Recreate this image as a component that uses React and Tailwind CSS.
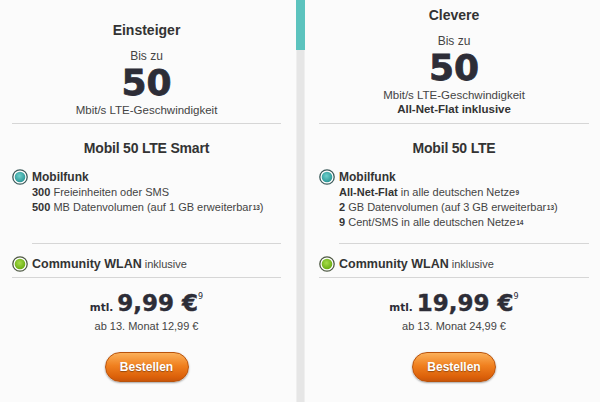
import React from "react";

function Dot({ id, inner, light, ring }) {
  return (
    <svg width="16" height="16" viewBox="0 0 16 16" className="shrink-0">
      <defs>
        <radialGradient id={id} cx="45%" cy="40%" r="60%">
          <stop offset="0%" stopColor={light} />
          <stop offset="100%" stopColor={inner} />
        </radialGradient>
      </defs>
      <circle cx="8" cy="8" r="7.2" fill="#ffffff" stroke={ring} strokeWidth="1.3" />
      <circle cx="8" cy="8" r="5.3" fill={`url(#${id})`} />
    </svg>
  );
}

function Sup({ children }) {
  return <sup className="text-[6.5px] font-bold relative top-[-1px] ml-[0.5px]">{children}</sup>;
}

function Plan({ title, extra, product, lines, price, later, pad }) {
  return (
    <div className={`flex flex-col ${pad}`}>
      <div className="h-[123px] flex flex-col items-center justify-end pb-[7px]">
        <div className="text-[14px] leading-[18px] font-bold text-[#333]">{title}</div>
        <div className="mt-[12px] text-[12px] leading-[11px] text-[#444]">Bis zu</div>
        <div className="font-['DejaVu_Sans',sans-serif] font-bold text-[36px] leading-[42px] text-[#2d2d37] [-webkit-text-stroke:0.8px_#2d2d37]">
          50
        </div>
        <div className="text-[11.5px] leading-[12px] text-[#444]">Mbit/s LTE-Geschwindigkeit</div>
        {extra && (
          <div className="mt-[1px] text-[11.5px] leading-[14px] font-bold text-[#333]">{extra}</div>
        )}
      </div>
      <div className="h-px bg-[#d6d6d6]" />
      <div className="h-[119px] flex flex-col">
        <div className="mt-[15px] text-[14px] leading-[18px] font-bold text-center text-[#333] tracking-[-0.2px]">
          {product}
        </div>
        <div className="mt-[12px] flex gap-[4px]">
          <Dot id={`t-${title}`} inner="#2a9696" light="#6fd0cc" ring="#3e5c5c" />
          <div className="flex flex-col">
            <div className="text-[12px] leading-[16px] font-bold text-[#333]">Mobilfunk</div>
            {lines.map((l, i) => (
              <div key={i} className="text-[11px] leading-[15px] text-[#444]">
                {l}
              </div>
            ))}
          </div>
        </div>
      </div>
      <div className="ml-[20px] h-px bg-[#d6d6d6]" />
      <div className="mt-[12px] flex items-center gap-[4px] h-[16px]">
        <Dot id={`g-${title}`} inner="#6aac12" light="#a6dc4a" ring="#4f5a44" />
        <div className="flex items-baseline gap-[3px]">
          <span className="text-[12.5px] leading-[16px] font-bold text-[#333]">Community WLAN</span>
          <span className="text-[11px] leading-[16px] text-[#444]">inklusive</span>
        </div>
      </div>
      <div className="mt-[5px] h-px bg-[#d6d6d6]" />
      <div className="mt-[11px] h-[28px] flex items-baseline justify-center font-['DejaVu_Sans',sans-serif] font-bold text-[#2d2d37]">
        <span className="text-[10.5px] mr-[4px]">mtl.</span>
        <span className="text-[23px] leading-[28px] [-webkit-text-stroke:0.4px_#2d2d37]">{price}</span>
        <span className="text-[8px] leading-[10px] self-start mt-[3px] font-normal">9</span>
      </div>
      <div className="mt-[2px] text-center text-[11px] leading-[14px] text-[#444]">{later}</div>
      <div className="mt-[19px] flex justify-center">
        <div className="w-[84px] h-[30px] rounded-full border border-[#b9530c] bg-[linear-gradient(to_bottom,#fbb05a,#f0801f_45%,#dc610a_85%,#c9560a)] shadow-[0_1px_2px_rgba(0,0,0,0.35)] flex items-center justify-center text-white font-bold text-[12px] [text-shadow:0_1px_1px_rgba(0,0,0,0.35)]">
          Bestellen
        </div>
      </div>
    </div>
  );
}

export default function App() {
  return (
    <div className="w-[600px] h-[402px] flex bg-[#fbfbfb] overflow-hidden font-['Liberation_Sans',Arial,sans-serif]">
      <div className="w-[296px] shrink-0">
        <Plan
          pad="pl-[12px] pr-[15px]"
          title="Einsteiger"
          product="Mobil 50 LTE Smart"
          lines={[
            <>
              <b className="text-[#333]">300</b> Freieinheiten oder SMS
            </>,
            <>
              <b className="text-[#333]">500</b> MB Datenvolumen (auf 1 GB erweiterbar<Sup>13</Sup>)
            </>,
          ]}
          price="9,99 €"
          later="ab 13. Monat 12,99 €"
        />
      </div>
      <div className="w-[9px] shrink-0 flex flex-col">
        <div className="h-[50px] bg-[#5cc3be]" />
        <div className="flex-1 bg-[#e6e6e6] border-x border-[#efefef]" />
      </div>
      <div className="flex-1">
        <Plan
          pad="pl-[14px] pr-[11px]"
          title="Clevere"
          extra="All-Net-Flat inklusive"
          product="Mobil 50 LTE"
          lines={[
            <>
              <b className="text-[#333]">All-Net-Flat</b> in alle deutschen Netze<Sup>9</Sup>
            </>,
            <>
              <b className="text-[#333]">2</b> GB Datenvolumen (auf 3 GB erweiterbar<Sup>13</Sup>)
            </>,
            <>
              <b className="text-[#333]">9</b> Cent/SMS in alle deutschen Netze<Sup>14</Sup>
            </>,
          ]}
          price="19,99 €"
          later="ab 13. Monat 24,99 €"
        />
      </div>
    </div>
  );
}
